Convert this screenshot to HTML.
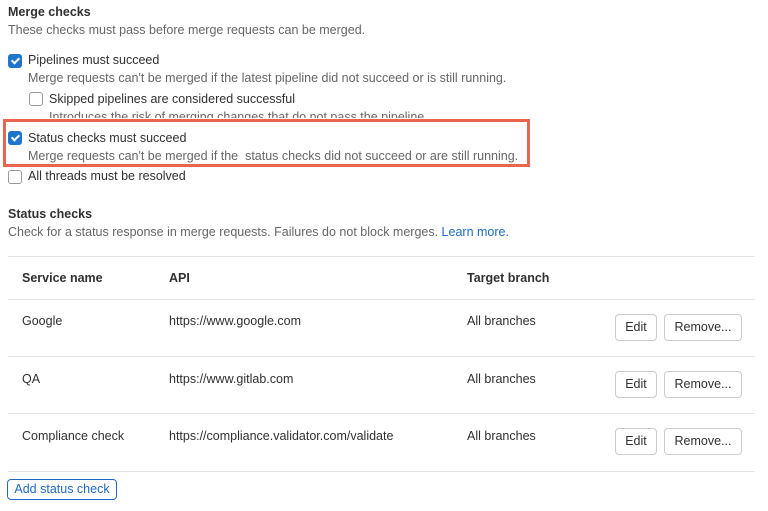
<!DOCTYPE html>
<html><head><style>
body{margin:0;width:768px;height:511px;background:#fff;font-family:"Liberation Sans",sans-serif;color:#303030;position:relative;overflow:hidden}
.a{position:absolute;white-space:nowrap;font-size:12.5px;line-height:16px}
.b{font-weight:bold}
.g{color:#666}
.cb{position:absolute;width:12px;height:12px;border-radius:3px}
.on{background:#1f75cb;border:1px solid #1f75cb}
.off{background:#fff;border:1px solid #999}
.on:after{content:"";position:absolute;left:4px;top:1px;width:3px;height:6px;border:solid #fff;border-width:0 2px 2px 0;transform:rotate(45deg)}
.ln{position:absolute;left:8px;width:747px;height:1px;background:#e5e5e5}
.btn{position:absolute;height:25px;border:1px solid #ccc;border-radius:4px;font-size:12.5px;line-height:25px;text-align:center;color:#303030;background:#fff}
</style></head><body>
<div class="a b" style="left:8px;top:4px">Merge checks</div>
<div class="a g" style="left:8px;top:22px">These checks must pass before merge requests can be merged.</div>
<div class="cb on" style="left:8px;top:54px"></div>
<div class="a" style="left:28px;top:52px">Pipelines must succeed</div>
<div class="a g" style="left:28px;top:70px">Merge requests can't be merged if the latest pipeline did not succeed or is still running.</div>
<div class="cb off" style="left:29px;top:92px"></div>
<div class="a" style="left:49px;top:91px">Skipped pipelines are considered successful</div>
<div class="a g" style="left:49px;top:109px;height:9px;overflow:hidden;line-height:16px">Introduces the risk of merging changes that do not pass the pipeline.</div>
<div style="position:absolute;left:3px;top:119px;width:521px;height:42px;border:3px solid #e8654f"></div>
<div class="cb on" style="left:8px;top:131px"></div>
<div class="a" style="left:28px;top:130px">Status checks must succeed</div>
<div class="a g" style="left:28px;top:148px">Merge requests can't be merged if the&nbsp; status checks did not succeed or are still running.</div>
<div class="cb off" style="left:8px;top:170px"></div>
<div class="a" style="left:28px;top:168px">All threads must be resolved</div>
<div class="a b" style="left:8px;top:206px">Status checks</div>
<div class="a g" style="left:8px;top:224px">Check for a status response in merge requests. Failures do not block merges. <span style="color:#1f69c4">Learn more.</span></div>
<div class="ln" style="top:256px"></div>
<div class="a b" style="left:22px;top:270px">Service name</div>
<div class="a b" style="left:169px;top:270px">API</div>
<div class="a b" style="left:467px;top:270px">Target branch</div>
<div class="ln" style="top:299px"></div>
<div class="a" style="left:22px;top:313px">Google</div>
<div class="a" style="left:169px;top:313px">https://www.google.com</div>
<div class="a" style="left:467px;top:313px">All branches</div>
<div class="btn" style="left:615px;top:314px;width:40px">Edit</div>
<div class="btn" style="left:664px;top:314px;width:76px">Remove...</div>
<div class="ln" style="top:356px"></div>
<div class="a" style="left:22px;top:371px">QA</div>
<div class="a" style="left:169px;top:371px">https://www.gitlab.com</div>
<div class="a" style="left:467px;top:371px">All branches</div>
<div class="btn" style="left:615px;top:371px;width:40px">Edit</div>
<div class="btn" style="left:664px;top:371px;width:76px">Remove...</div>
<div class="ln" style="top:413px"></div>
<div class="a" style="left:22px;top:428px">Compliance check</div>
<div class="a" style="left:169px;top:428px">https://compliance.validator.com/validate</div>
<div class="a" style="left:467px;top:428px">All branches</div>
<div class="btn" style="left:615px;top:428px;width:40px">Edit</div>
<div class="btn" style="left:664px;top:428px;width:76px">Remove...</div>
<div class="ln" style="top:471px"></div>
<div class="btn" style="left:7px;top:479px;width:108px;height:19px;line-height:19px;border-color:#1f69c4;color:#1f69c4">Add status check</div>
</body></html>
